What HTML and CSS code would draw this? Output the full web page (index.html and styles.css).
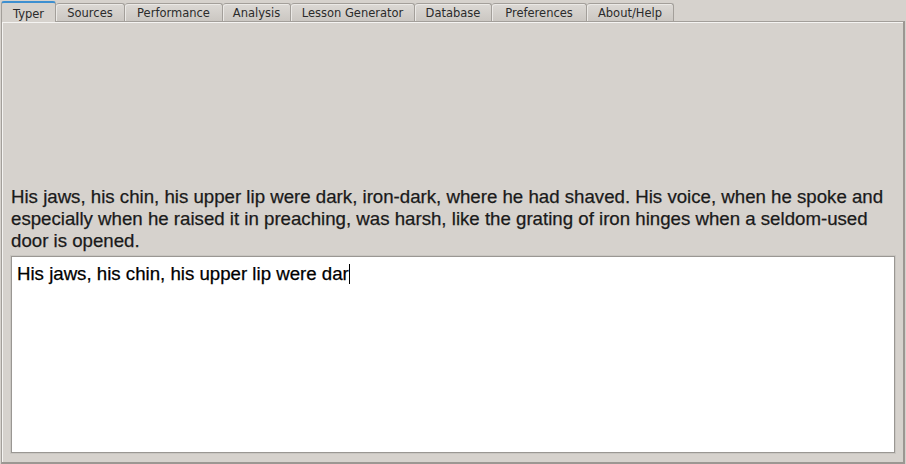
FILE: index.html
```html
<!DOCTYPE html>
<html>
<head>
<meta charset="utf-8">
<link rel="stylesheet" href="styles.css">
</head>
<body>
<div class="window">
  <div class="tabbar">
    <div class="tab active">Typer</div>
    <div class="tab">Sources</div>
    <div class="tab">Performance</div>
    <div class="tab">Analysis</div>
    <div class="tab">Lesson Generator</div>
    <div class="tab">Database</div>
    <div class="tab">Preferences</div>
    <div class="tab">About/Help</div>
  </div>
  <div class="panel">
    <div class="spacer"></div>
    <p class="source">His jaws, his chin, his upper lip were dark, iron-dark, where he had shaved. His voice, when he spoke and especially when he raised it in preaching, was harsh, like the grating of iron hinges when a seldom-used door is opened.</p>
    <div class="input"><span class="typed">His jaws, his chin, his upper lip were dar</span><span class="caret"></span></div>
  </div>
</div>
</body>
</html>
```

FILE: styles.css
```css
html, body {
  margin: 0;
  padding: 0;
  background: #d6d2cd;
  width: 906px;
  height: 464px;
  overflow: hidden;
}
.window {
  display: flex;
  flex-direction: column;
  width: 906px;
  height: 464px;
}
.tabbar {
  display: flex;
  height: 21px;
  padding-left: 1px;
  align-items: flex-end;
}
.tab {
  font-family: "DejaVu Sans", sans-serif;
  font-size: 11.5px;
  color: #2b2b2b;
  height: 18px;
  line-height: 18px;
  text-align: center;
  background: linear-gradient(#dcd9d5, #cbc7c2);
  border: 1px solid #a39f9a;
  border-bottom: none;
  border-left: none;
  border-radius: 3px 3px 0 0;
  box-sizing: border-box;
  box-shadow: inset 1px 1px 0 #ebe9e6;
}
.tab.active {
  height: 21px;
  line-height: 22px;
  background: #d6d2cd;
  border: 1px solid #a39f9a;
  border-top: 2px solid #3d8fd0;
  border-bottom: none;
  margin-bottom: -1px;
  position: relative;
  z-index: 1;
  box-shadow: none;
}
.tab:nth-child(1) { width: 55px; }
.tab:nth-child(2) { width: 69px; }
.tab:nth-child(3) { width: 98px; }
.tab:nth-child(4) { width: 68px; }
.tab:nth-child(5) { width: 124px; }
.tab:nth-child(6) { width: 77px; }
.tab:nth-child(7) { width: 95px; }
.tab:nth-child(8) { width: 87px; }
.panel {
  flex: 1;
  margin: 0 1px 0 1px;
  border: 1px solid #a39f9a;
  border-right: 2px solid #9b9792;
  border-bottom: 2px solid #9b9792;
  box-shadow: inset 1px 1px 0 #f5f4f2;
  display: flex;
  flex-direction: column;
  padding: 0 8px 9px 9px;
}
.spacer {
  flex: 1;
}
.source {
  margin: 0 0 4px 0;
  font-family: "Liberation Sans", Arial, sans-serif;
  font-size: 18.67px;
  line-height: 22px;
  color: #1a1a1a;
  -webkit-text-stroke: 0.25px #1a1a1a;
}
.input {
  height: 197px;
  flex: none;
  box-sizing: border-box;
  background: #fff;
  border: 1px solid #9a9793;
  box-shadow: 0 0 0 1px #c9c6c1;
  padding: 6px 5px;
  font-family: "Liberation Sans", Arial, sans-serif;
  font-size: 18.67px;
  line-height: 22px;
  color: #000;
  -webkit-text-stroke: 0.25px #000;
}
.caret {
  display: inline-block;
  width: 1px;
  height: 20px;
  background: #000;
  vertical-align: -4px;
}
```
